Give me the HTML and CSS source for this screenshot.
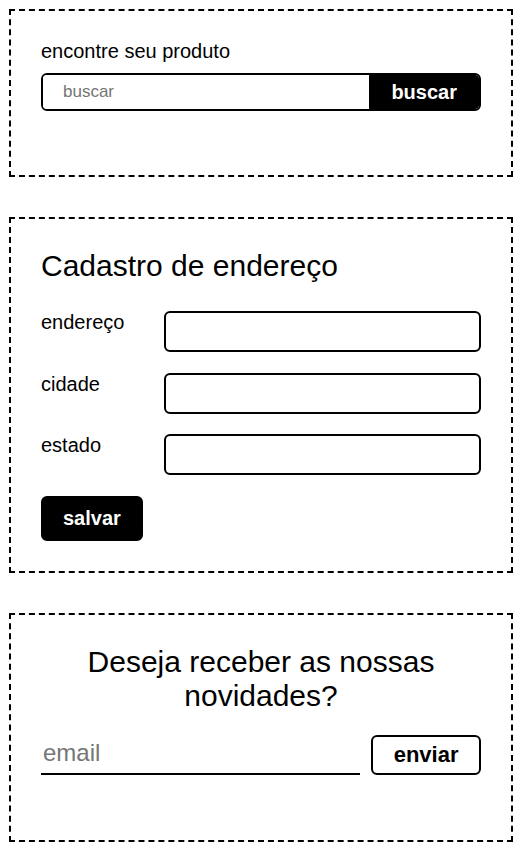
FILE: index.html
```html
<!DOCTYPE html>
<html lang="pt-BR">
<head>
<meta charset="utf-8">
<title>Formulários</title>
<link rel="stylesheet" href="styles.css">
</head>
<body>
<main class="page">
  <section class="box search-box">
    <label class="search-label" for="q">encontre seu produto</label>
    <form class="search-bar">
      <input id="q" class="search-input" type="text" placeholder="buscar">
      <button class="search-btn" type="button">buscar</button>
    </form>
  </section>

  <section class="box address-box">
    <h2 class="box-title">Cadastro de endereço</h2>
    <form class="address-form">
      <label class="field-label" for="end">endereço</label>
      <input id="end" class="field-input" type="text">
      <label class="field-label" for="cid">cidade</label>
      <input id="cid" class="field-input" type="text">
      <label class="field-label" for="est">estado</label>
      <input id="est" class="field-input" type="text">
      <div class="form-actions">
        <button class="save-btn" type="button">salvar</button>
      </div>
    </form>
  </section>

  <section class="box news-box">
    <h2 class="box-title news-title">Deseja receber as nossas novidades?</h2>
    <form class="news-form">
      <input class="email-input" type="email" placeholder="email">
      <button class="send-btn" type="button">enviar</button>
    </form>
  </section>
</main>
</body>
</html>
```

FILE: styles.css
```css
* {
  box-sizing: border-box;
}

html, body {
  margin: 0;
  background: #fff;
}

body {
  font-family: "Liberation Sans", Arial, sans-serif;
  color: #000;
}

.page {
  padding: 9px;
  display: flex;
  flex-direction: column;
  gap: 40px;
}

.box {
  border: 2px dashed #000;
  padding: 30px;
}

/* search */
.search-label {
  display: block;
  font-size: 20px;
  line-height: 20px;
  margin-bottom: 12px;
}

.search-bar {
  display: flex;
  height: 38px;
  border: 2px solid #000;
  border-radius: 6px;
  overflow: hidden;
  margin: 0 0 34px;
}

.search-input {
  flex: 1;
  min-width: 0;
  border: none;
  outline: none;
  padding: 0 20px;
  font-family: inherit;
  font-size: 17px;
  color: #000;
}

.search-input::placeholder {
  color: #757575;
}

.search-btn {
  border: none;
  background: #000;
  color: #fff;
  font-family: inherit;
  font-weight: bold;
  font-size: 20px;
  padding: 0 22px;
}

/* address */
.box-title {
  margin: 0 0 28px;
  font-size: 30px;
  font-weight: normal;
}

.address-form {
  display: grid;
  grid-template-columns: 123px 1fr;
  row-gap: 20.5px;
  margin: 0;
}

.field-label {
  font-size: 20px;
  line-height: 1.117;
}

.field-input {
  height: 41px;
  border: 2px solid #000;
  border-radius: 6px;
  font-family: inherit;
  font-size: 18px;
  padding: 0 10px;
}

.form-actions {
  grid-column: 1 / -1;
}

.save-btn {
  border: 2px solid #000;
  background: #000;
  color: #fff;
  border-radius: 6px;
  font-family: inherit;
  font-weight: bold;
  font-size: 20px;
  height: 45px;
  padding: 0 20px;
}

/* newsletter */
.news-title {
  text-align: center;
  margin-bottom: 22px;
}

.news-form {
  display: flex;
  align-items: flex-end;
  gap: 11px;
  margin: 0 0 35px;
}

.email-input {
  flex: 1;
  min-width: 0;
  border: none;
  border-bottom: 2px solid #000;
  outline: none;
  padding: 1px 2px 6px;
  font-family: inherit;
  font-size: 24px;
  color: #000;
  background: transparent;
}

.email-input::placeholder {
  color: #757575;
}

.send-btn {
  height: 40px;
  border: 2px solid #000;
  background: #fff;
  color: #000;
  border-radius: 6px;
  font-family: inherit;
  font-weight: bold;
  font-size: 22px;
  padding: 0 20.5px;
}
```
